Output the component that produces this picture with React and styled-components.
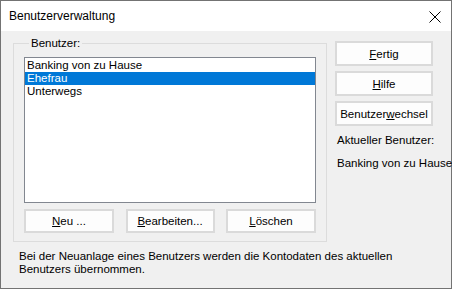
import React from 'react';
import styled, { createGlobalStyle } from 'styled-components';

const Global = createGlobalStyle`
  html, body {
    margin: 0;
    padding: 0;
    background: #f0f0f0;
  }
  * {
    box-sizing: border-box;
  }
`;

const Window = styled.div`
  width: 452px;
  height: 289px;
  border: 1px solid #737373;
  background: #f0f0f0;
  font-family: 'Liberation Sans', Arial, sans-serif;
  font-size: 11.5px;
  color: #000;
  display: flex;
  flex-direction: column;
`;

const TitleBar = styled.div`
  height: 30px;
  background: #fff;
  display: flex;
  align-items: center;
  justify-content: space-between;
  padding: 0 10px 0 8px;
  font-size: 12px;
`;

const CloseIcon = styled.svg`
  width: 12px;
  height: 12px;
  margin-top: 1px;
`;

const Body = styled.div`
  flex: 1;
  padding: 5px 18px 0 12px;
  display: flex;
  flex-direction: column;
`;

const MainRow = styled.div`
  display: flex;
  gap: 8px;
`;

const Group = styled.fieldset`
  margin: 0;
  width: 316px;
  border: 1px solid #dcdcdc;
  padding: 7px 10px 8px 10px;
  display: flex;
  flex-direction: column;
  gap: 6px;
`;

const Legend = styled.legend`
  padding: 0 2px;
  margin-left: 5px;
  line-height: 14px;
`;

const ListBox = styled.div`
  height: 146px;
  background: #fff;
  border: 1px solid #828790;
  padding-top: 1px;
`;

const Item = styled.div`
  height: 13px;
  line-height: 13px;
  padding-left: 2px;
  background: ${(p) => (p.$selected ? '#0078d7' : 'transparent')};
  color: ${(p) => (p.$selected ? '#fff' : '#000')};
`;

const ButtonRow = styled.div`
  display: flex;
  justify-content: space-between;
`;

const Button = styled.button`
  width: ${(p) => p.$w || 90}px;
  height: ${(p) => p.$h || 24}px;
  background: #fdfdfd;
  border: 2px solid #dadada;
  font: inherit;
  color: #000;
  padding: 0;
  display: flex;
  align-items: center;
  justify-content: center;
`;

const Side = styled.div`
  display: flex;
  flex-direction: column;
  gap: 5px;
  padding-top: 5px;
  width: 98px;
`;

const SideText = styled.div`
  padding-left: 2px;
  line-height: 18px;
  white-space: nowrap;
`;

const Info = styled.div`
  margin: 8px 0 0 6px;
  line-height: 13px;
`;

const Key = ({ children }) => <u>{children}</u>;

export default function App() {
  return (
    <>
      <Global />
      <Window>
        <TitleBar>
          <span>Benutzerverwaltung</span>
          <CloseIcon viewBox="0 0 12 12">
            <path d="M0.5 0.5 L11.5 11.5 M11.5 0.5 L0.5 11.5" stroke="#000" strokeWidth="1" fill="none" />
          </CloseIcon>
        </TitleBar>
        <Body>
          <MainRow>
            <Group>
              <Legend>Benutzer:</Legend>
              <ListBox>
                <Item>Banking von zu Hause</Item>
                <Item $selected>Ehefrau</Item>
                <Item>Unterwegs</Item>
              </ListBox>
              <ButtonRow>
                <Button>
                  <Key>N</Key>eu ...
                </Button>
                <Button $w={89}>
                  <Key>B</Key>earbeiten...
                </Button>
                <Button>
                  <Key>L</Key>öschen
                </Button>
              </ButtonRow>
            </Group>
            <Side>
              <Button $w={98} $h={25}>
                <Key>F</Key>ertig
              </Button>
              <Button $w={98} $h={25}>
                <Key>H</Key>ilfe
              </Button>
              <Button $w={98} $h={25}>
                Benutzer<Key>w</Key>echsel
              </Button>
              <SideText>Aktueller Benutzer:</SideText>
              <SideText>Banking von zu Hause</SideText>
            </Side>
          </MainRow>
          <Info>
            Bei der Neuanlage eines Benutzers werden die Kontodaten des aktuellen
            <br />
            Benutzers übernommen.
          </Info>
        </Body>
      </Window>
    </>
  );
}
